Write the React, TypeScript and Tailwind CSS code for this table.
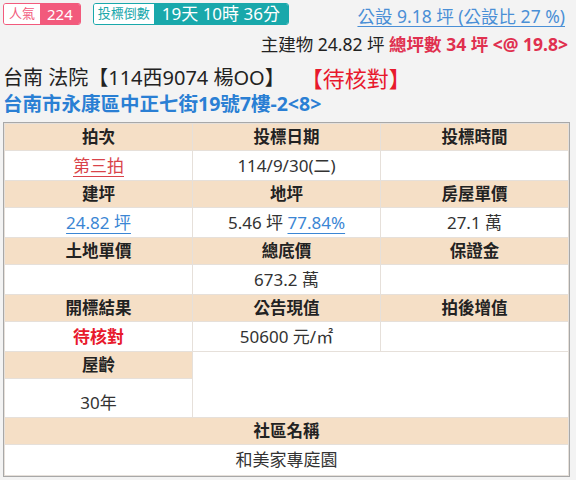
import React from 'react';

const font = { fontFamily: '"Noto Sans", "Noto Sans CJK TC", sans-serif' };

const Head = ({ children, className = '' }: { children?: React.ReactNode; className?: string }) => (
    <div className={`bg-[#f5dfc6] h-[26px] flex items-center justify-center font-bold text-[16.5px] text-[#222] ${className}`}>
        {children}
    </div>
);

const Cell = ({ children, className = '' }: { children?: React.ReactNode; className?: string }) => (
    <div className={`bg-white h-[29px] flex items-center justify-center text-[17px] text-[#333] ${className}`}>
        {children}
    </div>
);

const App = () => {
    return (
        <div className="w-[576px] h-[480px] bg-[#f3f3f3] overflow-hidden" style={font}>
            {/* top badges */}
            <div className="flex items-start justify-between px-[3px] pt-[3px]">
                <div className="flex items-center gap-[12px]">
                    <div className="flex h-[22px] rounded-[3px] border border-[#f25a7c] overflow-hidden">
                        <div className="bg-white text-[#f25a7c] text-[13px] px-[5px] flex items-center">人氣</div>
                        <div className="bg-[#f25a7c] text-white text-[15px] px-[7px] flex items-center">224</div>
                    </div>
                    <div className="flex h-[22px] rounded-[3px] border border-[#19a8ab] overflow-hidden">
                        <div className="bg-white text-[#19a8ab] text-[13px] px-[4px] flex items-center">投標倒數</div>
                        <div className="bg-[#19a8ab] text-white text-[17px] px-[8px] flex items-center">19天 10時 36分</div>
                    </div>
                </div>
                <a className="text-[#4a8fd6] text-[17.5px] underline underline-offset-[3px] mt-[3px] mr-[8px] leading-[20px]">
                    公設 9.18 坪 (公設比 27 %)
                </a>
            </div>
            <div className="flex justify-end pr-[8px] mt-[8px] text-[17.5px] leading-[20px] text-[#222]">
                主建物 24.82 坪&nbsp;
                <span className="text-[#e0304f] font-bold">總坪數 34 坪 &lt;@ 19.8&gt;</span>
            </div>

            <div className="px-[3px] mt-[11px] text-[20px] leading-[26px] text-[#222] flex items-center">
                <span>台南 法院【114西9074 楊OO】</span>
                <span className="text-[#e8192c] text-[22px] ml-[16px]">【待核對】</span>
            </div>
            <div className="px-[3px] mt-[1px] text-[19.5px] leading-[24px] font-bold text-[#2a7fd4]">
                台南市永康區中正七街19號7樓-2&lt;8&gt;
            </div>

            {/* table */}
            <div className="mx-[3px] mt-[6px] w-[567px] border border-[#a8a8a8] bg-[#e6e0da] p-[1px] flex flex-col gap-[1px]">
                <div className="grid grid-cols-3 gap-[1px]">
                    <Head>拍次</Head>
                    <Head>投標日期</Head>
                    <Head>投標時間</Head>
                    <Cell><a className="text-[#d9434a] underline underline-offset-[4px]">第三拍</a></Cell>
                    <Cell>114/9/30(二)</Cell>
                    <Cell />
                    <Head>建坪</Head>
                    <Head>地坪</Head>
                    <Head>房屋單價</Head>
                    <Cell><a className="text-[#3b86d4] underline underline-offset-[4px]">24.82 坪</a></Cell>
                    <Cell>5.46 坪&nbsp;<a className="text-[#3b86d4] underline underline-offset-[4px]">77.84%</a></Cell>
                    <Cell>27.1 萬</Cell>
                    <Head>土地單價</Head>
                    <Head>總底價</Head>
                    <Head>保證金</Head>
                    <Cell />
                    <Cell>673.2 萬</Cell>
                    <Cell />
                    <Head>開標結果</Head>
                    <Head>公告現值</Head>
                    <Head>拍後增值</Head>
                    <Cell className="text-[#e8192c] font-bold">待核對</Cell>
                    <Cell>50600 元/㎡</Cell>
                    <Cell />
                </div>
                <div className="grid grid-cols-3 gap-[1px]">
                    <div className="flex flex-col gap-[1px]">
                        <Head>屋齡</Head>
                        <Cell className="h-[38px] pt-[10px]">30年</Cell>
                    </div>
                    <div className="col-span-2 bg-white" />
                </div>
                <Head>社區名稱</Head>
                <Cell className="h-[30px]">和美家專庭園</Cell>
            </div>
        </div>
    );
};

export default App;
